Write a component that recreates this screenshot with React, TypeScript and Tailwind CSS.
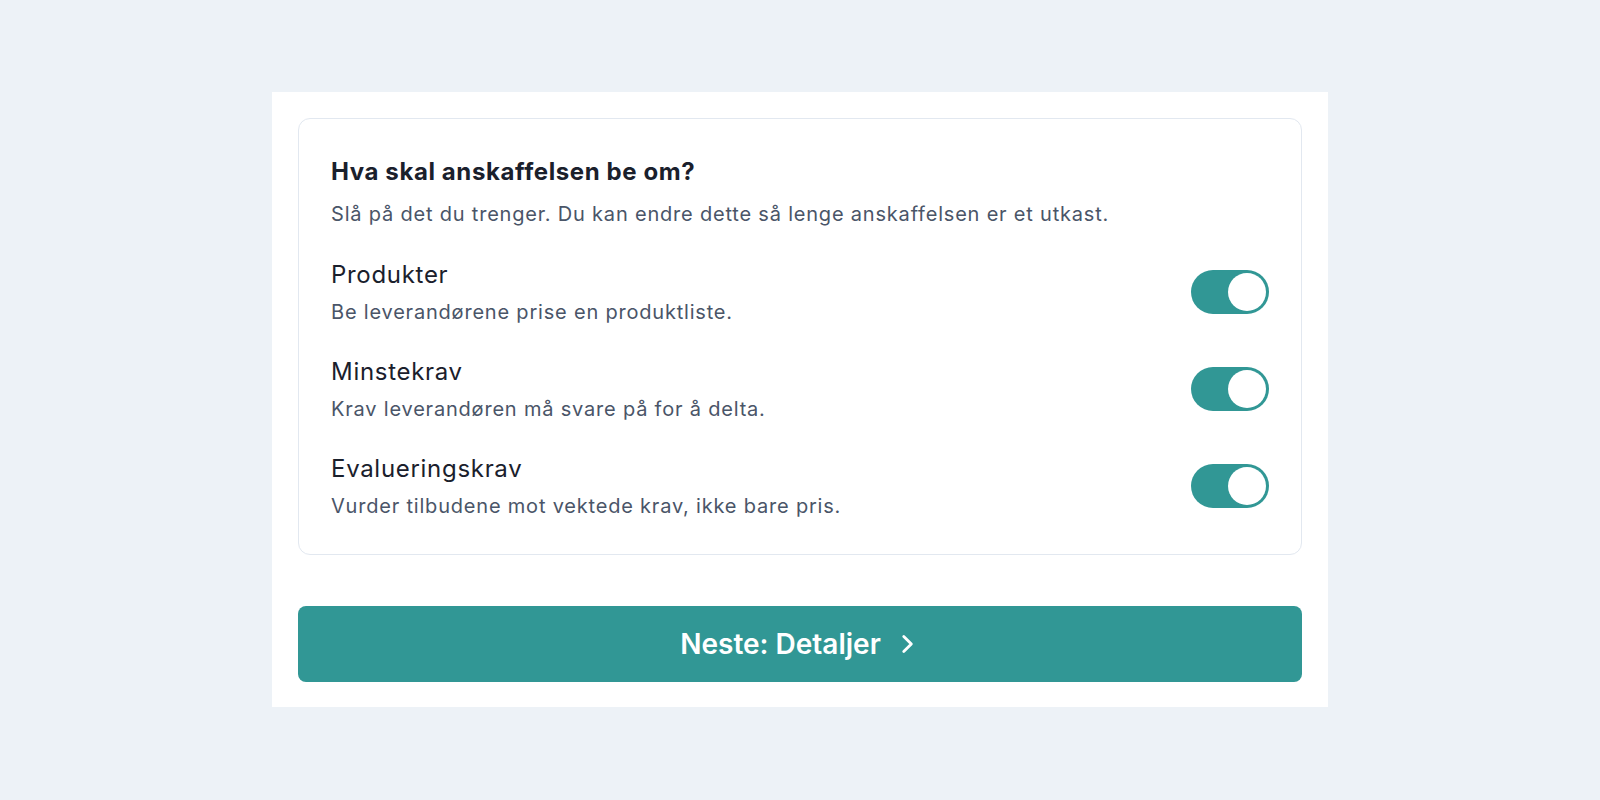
import { useState } from 'react';

const OPTIONS = [
  { id: 'products', title: 'Produkter', desc: 'Be leverandørene prise en produktliste.' },
  { id: 'minimum', title: 'Minstekrav', desc: 'Krav leverandøren må svare på for å delta.' },
  { id: 'evaluation', title: 'Evalueringskrav', desc: 'Vurder tilbudene mot vektede krav, ikke bare pris.' }
];

const Toggle = ({ on, onClick }: { on: boolean; onClick: () => void }) => (
  <button
    type="button"
    role="switch"
    aria-checked={on}
    onClick={onClick}
    className={`flex w-[78px] h-[44px] shrink-0 items-center rounded-full p-[3px] transition-colors ${
      on ? 'bg-[#319795] justify-end' : 'bg-[#cbd5e0] justify-start'
    }`}
  >
    <span className="block w-[38px] h-[38px] rounded-full bg-white" />
  </button>
);

const App = () => {
  const [enabled, setEnabled] = useState<Record<string, boolean>>({
    products: true,
    minimum: true,
    evaluation: true
  });

  return (
    <div className="min-h-screen bg-[#edf2f7] flex justify-center pt-[92px] font-['Inter',sans-serif]">
      <div className="w-[1056px] h-fit bg-white px-[26px] pt-[26px] pb-[25px]">
        <div className="border border-[#e2e8f0] rounded-xl px-8 pt-[35px] pb-[33px]">
          <h2 className="text-[24px] leading-[36px] font-bold tracking-[0.6px] text-[#1a202c]">
            Hva skal anskaffelsen be om?
          </h2>
          <p className="mt-[9px] text-[20px] leading-[30px] tracking-[0.8px] text-[#4a5568]">
            Slå på det du trenger. Du kan endre dette så lenge anskaffelsen er et utkast.
          </p>

          <div className="mt-[28px] flex flex-col gap-[27px]">
            {OPTIONS.map((opt) => (
              <div key={opt.id} className="flex items-center justify-between">
                <div>
                  <div className="text-[24px] leading-[36px] tracking-[0.7px] text-[#1a202c]">
                    {opt.title}
                  </div>
                  <div className="mt-[4px] text-[20px] leading-[30px] tracking-[0.8px] text-[#4a5568]">
                    {opt.desc}
                  </div>
                </div>
                <Toggle
                  on={enabled[opt.id]}
                  onClick={() => setEnabled((s) => ({ ...s, [opt.id]: !s[opt.id] }))}
                />
              </div>
            ))}
          </div>
        </div>

        <button
          type="button"
          className="mt-[51px] w-full h-[76px] rounded-lg bg-[#319795] hover:bg-[#2c7a7b] text-white flex items-center justify-center gap-[13px]"
        >
          <span className="text-[28px] font-semibold">Neste: Detaljer</span>
          <svg width="26" height="26" viewBox="0 0 24 24" fill="none" stroke="currentColor" strokeWidth="2.6" strokeLinecap="round" strokeLinejoin="round">
            <path d="M9 5l7 7-7 7" />
          </svg>
        </button>
      </div>
    </div>
  );
};

export default App;
